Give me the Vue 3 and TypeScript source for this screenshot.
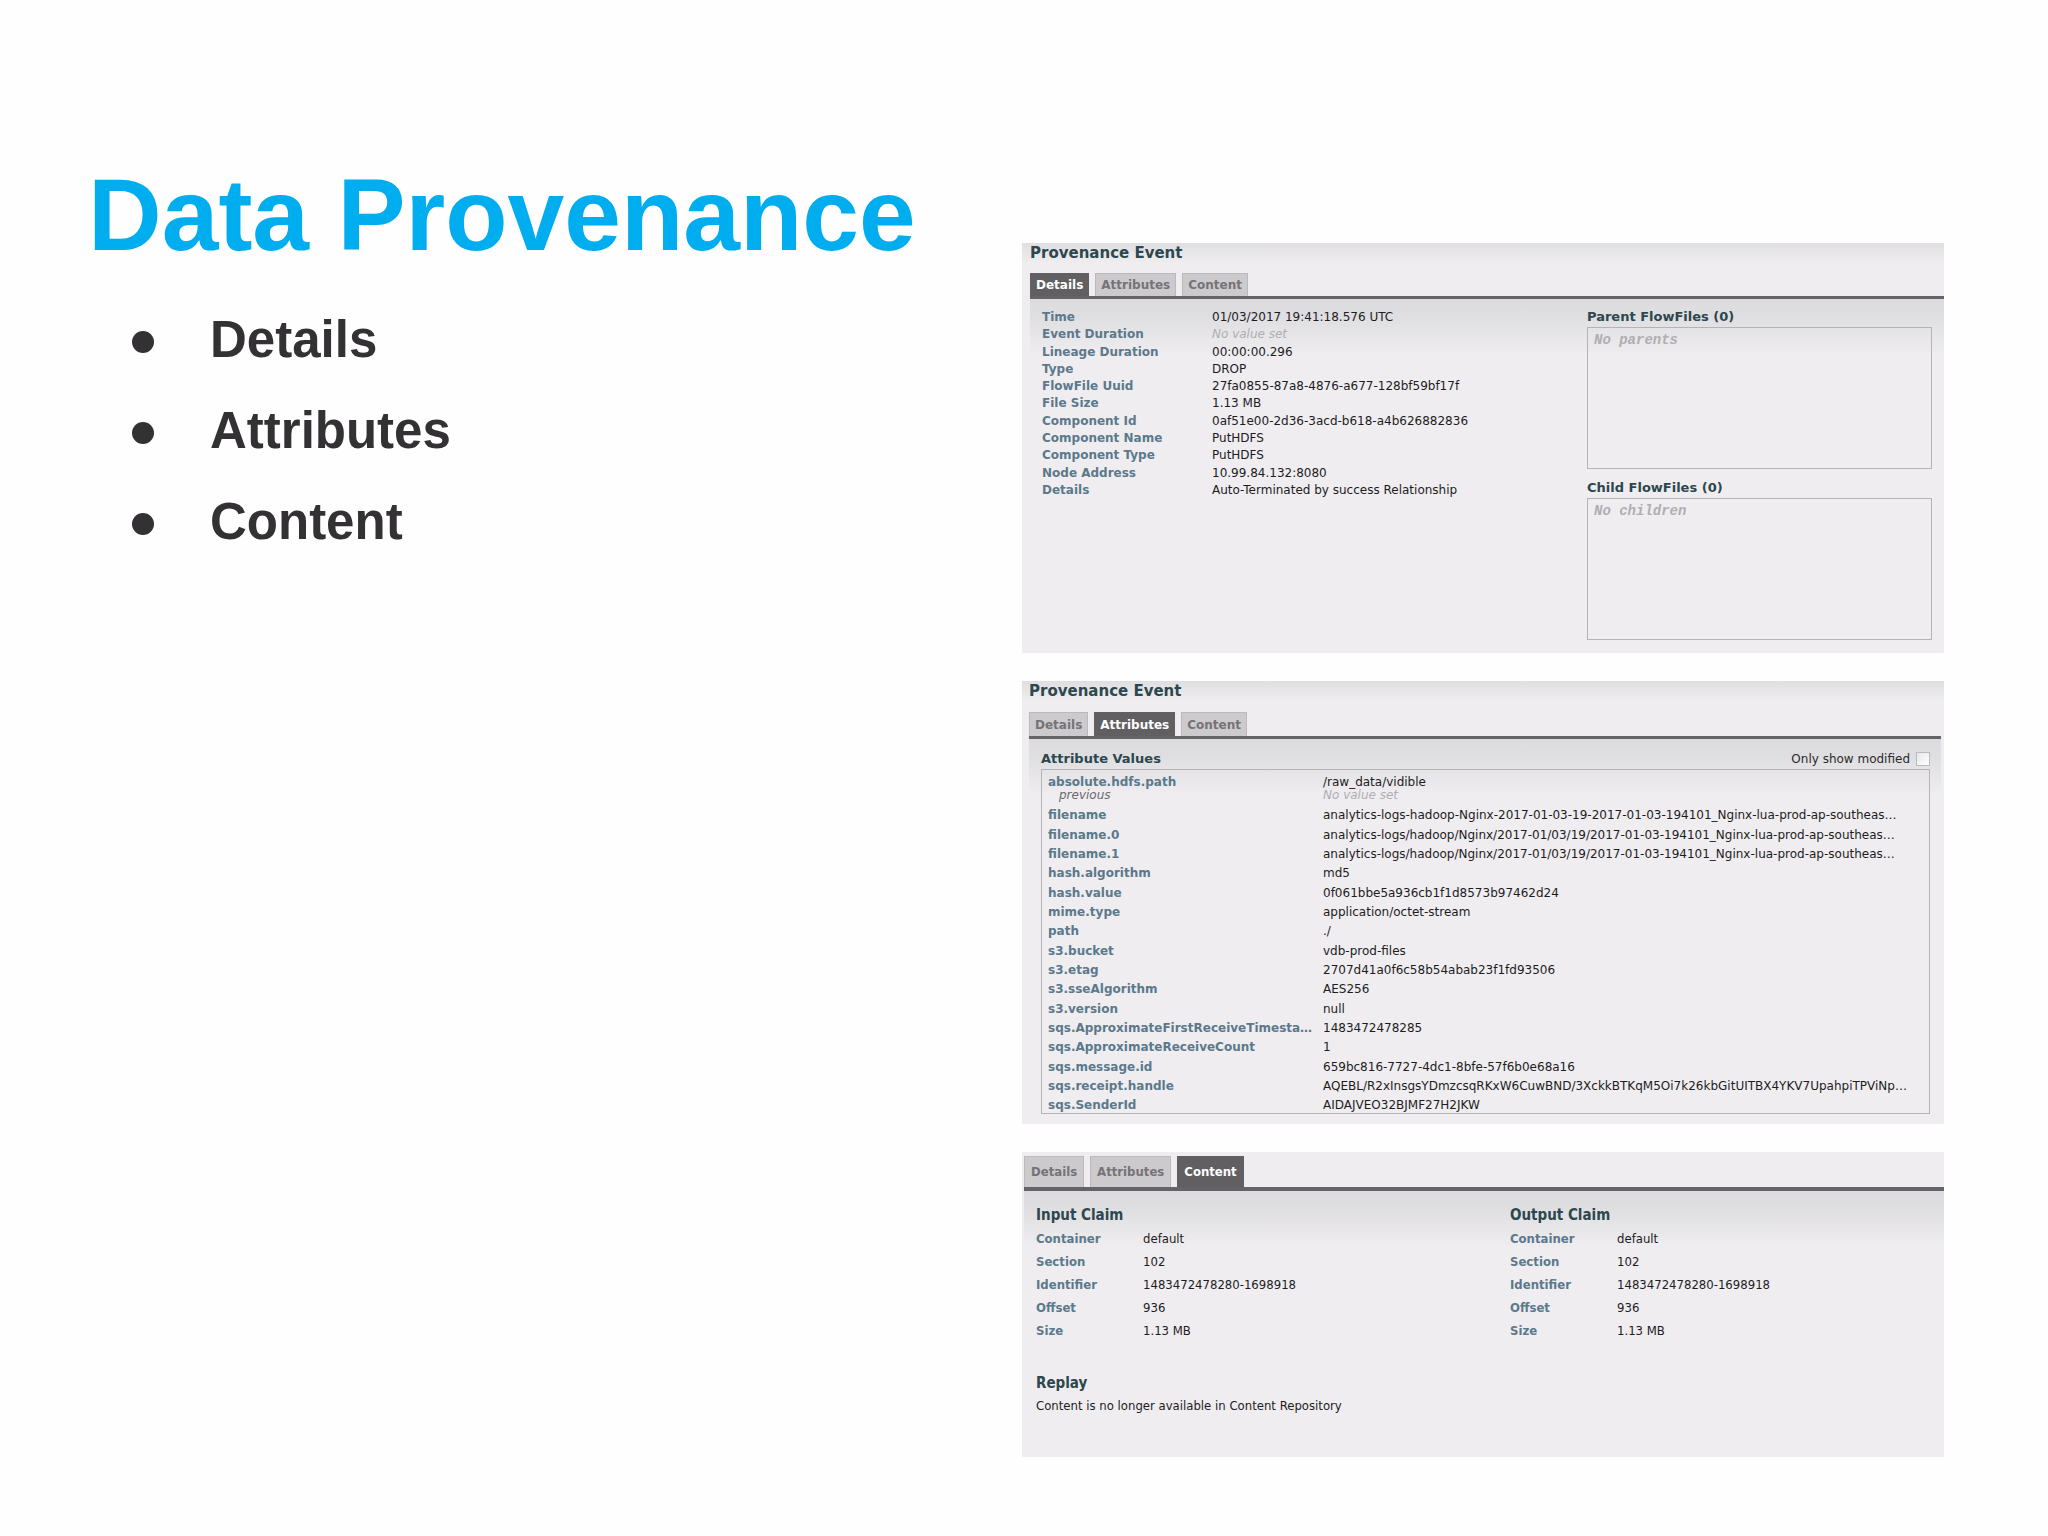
<script setup lang="ts">
import { ref } from 'vue'

interface Row {
  name: string
  value: string
  unset?: boolean
  previous?: boolean
}

const topics: string[] = ['Details', 'Attributes', 'Content']
const tabs: string[] = ['Details', 'Attributes', 'Content']

const details: Row[] = [
  { name: 'Time', value: '01/03/2017 19:41:18.576 UTC' },
  { name: 'Event Duration', value: 'No value set', unset: true },
  { name: 'Lineage Duration', value: '00:00:00.296' },
  { name: 'Type', value: 'DROP' },
  { name: 'FlowFile Uuid', value: '27fa0855-87a8-4876-a677-128bf59bf17f' },
  { name: 'File Size', value: '1.13 MB' },
  { name: 'Component Id', value: '0af51e00-2d36-3acd-b618-a4b626882836' },
  { name: 'Component Name', value: 'PutHDFS' },
  { name: 'Component Type', value: 'PutHDFS' },
  { name: 'Node Address', value: '10.99.84.132:8080' },
  { name: 'Details', value: 'Auto-Terminated by success Relationship' },
]

const relatives = [
  { title: 'Parent FlowFiles (0)', empty: 'No parents' },
  { title: 'Child FlowFiles (0)', empty: 'No children' },
]

const attributes: Row[] = [
  { name: 'absolute.hdfs.path', value: '/raw_data/vidible', previous: true },
  { name: 'filename', value: 'analytics-logs-hadoop-Nginx-2017-01-03-19-2017-01-03-194101_Nginx-lua-prod-ap-southeas…' },
  { name: 'filename.0', value: 'analytics-logs/hadoop/Nginx/2017-01/03/19/2017-01-03-194101_Nginx-lua-prod-ap-southeas…' },
  { name: 'filename.1', value: 'analytics-logs/hadoop/Nginx/2017-01/03/19/2017-01-03-194101_Nginx-lua-prod-ap-southeas…' },
  { name: 'hash.algorithm', value: 'md5' },
  { name: 'hash.value', value: '0f061bbe5a936cb1f1d8573b97462d24' },
  { name: 'mime.type', value: 'application/octet-stream' },
  { name: 'path', value: './' },
  { name: 's3.bucket', value: 'vdb-prod-files' },
  { name: 's3.etag', value: '2707d41a0f6c58b54abab23f1fd93506' },
  { name: 's3.sseAlgorithm', value: 'AES256' },
  { name: 's3.version', value: 'null' },
  { name: 'sqs.ApproximateFirstReceiveTimesta…', value: '1483472478285' },
  { name: 'sqs.ApproximateReceiveCount', value: '1' },
  { name: 'sqs.message.id', value: '659bc816-7727-4dc1-8bfe-57f6b0e68a16' },
  { name: 'sqs.receipt.handle', value: 'AQEBL/R2xInsgsYDmzcsqRKxW6CuwBND/3XckkBTKqM5Oi7k26kbGitUITBX4YKV7UpahpiTPViNp…' },
  { name: 'sqs.SenderId', value: 'AIDAJVEO32BJMF27H2JKW' },
]

const claimRows: Row[] = [
  { name: 'Container', value: 'default' },
  { name: 'Section', value: '102' },
  { name: 'Identifier', value: '1483472478280-1698918' },
  { name: 'Offset', value: '936' },
  { name: 'Size', value: '1.13 MB' },
]
const claims: string[] = ['Input Claim', 'Output Claim']

const onlyModified = ref(false)
</script>

<template>
  <main class="slide">
    <section class="intro">
      <h1>Data Provenance</h1>
      <ul class="topics">
        <li v-for="topic in topics" :key="topic">{{ topic }}</li>
      </ul>
    </section>

    <div class="panels">
      <section class="panel panel-details">
        <h2 class="panel-title">Provenance Event</h2>
        <nav class="tabs">
          <button v-for="t in tabs" :key="t" type="button" class="tab" :class="{ active: t === 'Details' }">{{ t }}</button>
        </nav>
        <div class="body details-body">
          <table class="props details-table">
            <tbody>
              <tr v-for="row in details" :key="row.name">
                <th scope="row">{{ row.name }}</th>
                <td :class="{ unset: row.unset }">{{ row.value }}</td>
              </tr>
            </tbody>
          </table>
          <div class="relatives">
            <section v-for="r in relatives" :key="r.title">
              <h3>{{ r.title }}</h3>
              <div class="relative-box">{{ r.empty }}</div>
            </section>
          </div>
        </div>
      </section>

      <section class="panel panel-attributes">
        <h2 class="panel-title">Provenance Event</h2>
        <nav class="tabs">
          <button v-for="t in tabs" :key="t" type="button" class="tab" :class="{ active: t === 'Attributes' }">{{ t }}</button>
        </nav>
        <div class="body attributes-body">
          <header class="attributes-head">
            <h3>Attribute Values</h3>
            <label class="modified" for="only-modified">
              Only show modified
              <input id="only-modified" v-model="onlyModified" type="checkbox" />
            </label>
          </header>
          <div class="attributes-box">
            <table class="props attributes-table">
              <tbody>
                <tr v-for="row in attributes" :key="row.name" :class="{ changed: row.previous }">
                  <th scope="row">
                    {{ row.name }}
                    <span v-if="row.previous" class="previous">previous</span>
                  </th>
                  <td>
                    {{ row.value }}
                    <span v-if="row.previous" class="previous-value">No value set</span>
                  </td>
                </tr>
              </tbody>
            </table>
          </div>
        </div>
      </section>

      <section class="panel panel-content">
        <nav class="tabs">
          <button v-for="t in tabs" :key="t" type="button" class="tab" :class="{ active: t === 'Content' }">{{ t }}</button>
        </nav>
        <div class="body content-body">
          <div class="claims">
            <section v-for="claim in claims" :key="claim">
              <h3>{{ claim }}</h3>
              <table class="props claim-table">
                <tbody>
                  <tr v-for="row in claimRows" :key="row.name">
                    <th scope="row">{{ row.name }}</th>
                    <td>{{ row.value }}</td>
                  </tr>
                </tbody>
              </table>
            </section>
          </div>
          <section class="replay">
            <h3>Replay</h3>
            <p>Content is no longer available in Content Repository</p>
          </section>
        </div>
      </section>
    </div>
  </main>
</template>

<style>
body {
  background: #fefefe;
}
</style>

<style scoped>
* {
  box-sizing: border-box;
}

h1,
h2,
h3,
p,
ul {
  margin: 0;
  padding: 0;
}

.slide {
  display: grid;
  grid-template-columns: minmax(0, 1fr) minmax(0, 1fr);
  gap: 10px;
  padding: 152px 104px 79px 90px;
  font-family: 'Liberation Sans', Arial, sans-serif;
}

h1 {
  margin: 3px 0 0 -2px;
  color: #00adef;
  font-size: 102px;
  line-height: 120px;
  white-space: nowrap;
}

.topics {
  list-style: none;
  margin-top: 19px;
  padding-left: 42px;
}

.topics li {
  display: flex;
  align-items: center;
  gap: 56px;
  color: #333133;
  font-size: 51px;
  font-weight: bold;
  line-height: 91px;
}

.topics li::before {
  content: '';
  width: 22px;
  height: 22px;
  margin-top: 4px;
  border-radius: 50%;
  background: #333133;
}

.panels {
  display: flex;
  flex-direction: column;
  gap: 28px;
  padding-top: 91px;
  font-family: 'DejaVu Sans', Verdana, sans-serif;
  font-size: 12px;
  color: #1d1c1e;
}

.panel {
  background: linear-gradient(#dfdee1, #efedf0 20px);
}

.panel-details {
  padding-left: 8px;
}

.panel-attributes {
  padding: 0 3px 0 7px;
}

.panel-title {
  color: #2c474e;
  font-size: 15px;
  line-height: 20px;
}

.tabs {
  display: flex;
  gap: 6px;
  margin-top: 10px;
  border-bottom: 3px solid #656367;
}

.tab {
  height: 23px;
  padding: 0 5px;
  border: 1px solid #bbb9bc;
  border-bottom: 0;
  background: #cccacd;
  color: #757376;
  font-family: inherit;
  font-size: 12px;
  font-weight: bold;
  line-height: 22px;
}

.tab.active {
  border-color: #625f63;
  background: #625f63;
  color: #fff;
}

.body {
  background: linear-gradient(#dcdbde, #dfdee1 18px, #efedf0 56px);
}

h3 {
  color: #2c474e;
  font-size: 13px;
  line-height: 18px;
}

.props {
  border-collapse: collapse;
  line-height: 17px;
}

.props th,
.props td {
  padding: 0;
  text-align: left;
  vertical-align: middle;
  white-space: nowrap;
}

.props th {
  color: #5b798b;
}

.props .unset,
.previous-value {
  color: #b0aeb2;
  font-style: italic;
}

.details-body {
  display: flex;
  justify-content: space-between;
  align-items: flex-start;
  padding: 9px 12px 13px;
}

.details-table {
  height: 190px;
  margin-top: 1px;
}

.details-table th {
  width: 170px;
}

.relatives {
  display: flex;
  flex-direction: column;
  gap: 10px;
  width: 345px;
}

.relative-box {
  height: 142px;
  margin-top: 1px;
  padding: 4px 6px;
  border: 1px solid #b5b3b7;
  color: #b0aeb2;
  font: italic bold 14px/16px 'Liberation Mono', 'Courier New', monospace;
}

.panel-attributes .tab {
  height: 24px;
}

.panel-attributes .tabs {
  margin-top: 11px;
}

.attributes-body {
  padding: 9px 11px 10px 12px;
}

.attributes-head {
  display: flex;
  justify-content: space-between;
  align-items: center;
  height: 21px;
}

.modified {
  display: flex;
  align-items: center;
  gap: 6px;
  color: #2b2a2c;
}

.modified input {
  appearance: none;
  width: 14px;
  height: 14px;
  margin: 0;
  border: 1px solid #bbb9bc;
  background: linear-gradient(135deg, #e8e7e9, #fff);
}

.modified input:checked {
  background: #625f63;
}

.attributes-box {
  height: 345px;
  padding: 2px 6px 0;
  border: 1px solid #b5b3b7;
}

.attributes-table {
  line-height: 13px;
}

.attributes-table tr {
  height: 19px;
}

.attributes-table tr:nth-child(3n) {
  height: 20px;
}

.attributes-table .changed {
  height: 34px;
}

.attributes-table th {
  width: 275px;
}

.previous,
.previous-value {
  display: block;
  font-weight: normal;
}

.previous {
  padding-left: 11px;
  color: #6b696c;
  font-style: italic;
}

.panel-content {
  padding: 4px 0 0 2px;
  background: #efedf0;
  font-family: 'DejaVu Sans Condensed', 'DejaVu Sans', Verdana, sans-serif;
  font-size: 13px;
}

.panel-content .tabs {
  margin-top: 0;
  border-bottom-width: 4px;
}

.panel-content .tab {
  height: 31px;
  padding: 0 6px;
  font-size: 13px;
  line-height: 30px;
}

.content-body {
  padding: 13px 12px 40px;
}

.content-body h3 {
  font-size: 15px;
  line-height: 23px;
}

.claims {
  display: grid;
  grid-template-columns: 474fr 422fr;
}

.claim-table {
  line-height: 23px;
}

.claim-table th {
  width: 107px;
}

.replay {
  margin-top: 30px;
}

.replay p {
  line-height: 22px;
}
</style>
